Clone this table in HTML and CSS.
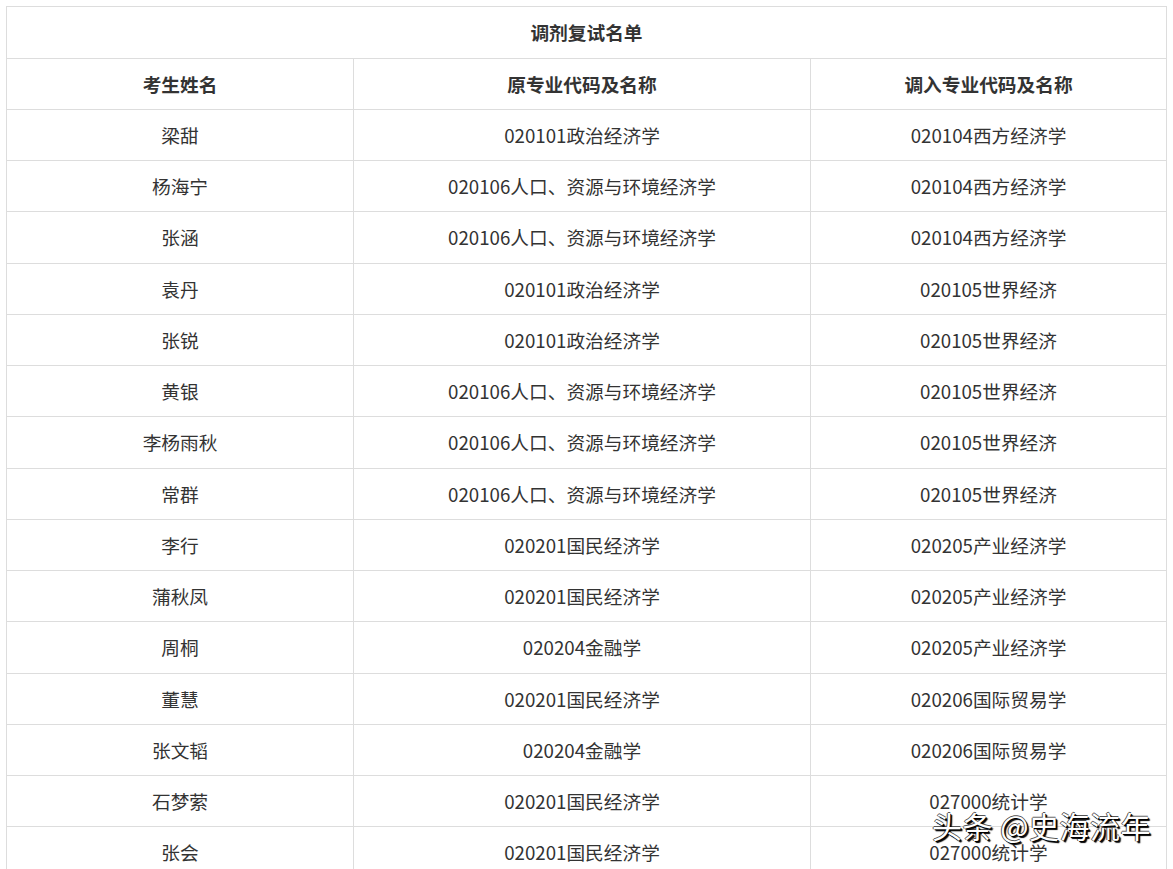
FILE: index.html
```html
<!DOCTYPE html>
<html lang="zh-CN">
<head>
<meta charset="utf-8">
<title>调剂复试名单</title>
<link rel="stylesheet" href="styles.css">
</head>
<body>
<div class="page">
<table class="list">
<colgroup><col class="c1"><col class="c2"><col class="c3"></colgroup>
<thead>
<tr class="title"><th colspan="3">调剂复试名单</th></tr>
<tr class="head"><th>考生姓名</th><th>原专业代码及名称</th><th>调入专业代码及名称</th></tr>
</thead>
<tbody>
<tr><td>梁甜</td><td>020101政治经济学</td><td>020104西方经济学</td></tr>
<tr><td>杨海宁</td><td>020106人口、资源与环境经济学</td><td>020104西方经济学</td></tr>
<tr><td>张涵</td><td>020106人口、资源与环境经济学</td><td>020104西方经济学</td></tr>
<tr><td>袁丹</td><td>020101政治经济学</td><td>020105世界经济</td></tr>
<tr><td>张锐</td><td>020101政治经济学</td><td>020105世界经济</td></tr>
<tr><td>黄银</td><td>020106人口、资源与环境经济学</td><td>020105世界经济</td></tr>
<tr><td>李杨雨秋</td><td>020106人口、资源与环境经济学</td><td>020105世界经济</td></tr>
<tr><td>常群</td><td>020106人口、资源与环境经济学</td><td>020105世界经济</td></tr>
<tr><td>李行</td><td>020201国民经济学</td><td>020205产业经济学</td></tr>
<tr><td>蒲秋凤</td><td>020201国民经济学</td><td>020205产业经济学</td></tr>
<tr><td>周桐</td><td>020204金融学</td><td>020205产业经济学</td></tr>
<tr><td>董慧</td><td>020201国民经济学</td><td>020206国际贸易学</td></tr>
<tr><td>张文韬</td><td>020204金融学</td><td>020206国际贸易学</td></tr>
<tr><td>石梦萦</td><td>020201国民经济学</td><td>027000统计学</td></tr>
<tr><td>张会</td><td>020201国民经济学</td><td>027000统计学</td></tr>
</tbody>
</table>
<div class="watermark">头条 @史海流年</div>
</div>
</body>
</html>
```

FILE: styles.css
```css
html, body {
  margin: 0;
  padding: 0;
  background: #fff;
}
body {
  font-family: "Noto Sans CJK SC", "Microsoft YaHei", sans-serif;
  color: #333;
  overflow: hidden;
}
.page {
  position: relative;
  padding: 6px 0 0 6px;
  height: 863px;
  overflow: hidden;
}
.list {
  border-collapse: collapse;
  table-layout: fixed;
  width: 1160px;
}
.c1 { width: 347px; }
.c2 { width: 457px; }
.c3 { width: 356px; }
.list th, .list td {
  border: 1px solid #ddd;
  padding: 0;
  text-align: center;
  vertical-align: middle;
  font-size: 18.7px;
  line-height: 24px;
}
.list th { font-weight: 700; color: #333; }
.list td { font-weight: 400; color: #333; }
.title th { height: 50.75px; }
.head th { height: 50px; }
.list tbody td { height: 50.26px; }
.watermark {
  position: absolute;
  left: 932px;
  top: 805px;
  font-family: "Noto Sans CJK SC", sans-serif;
  font-size: 30px;
  line-height: 40px;
  color: #fff;
  letter-spacing: 0.5px;
  text-shadow: 1px 1px 0 #000, 2px 2px 1px #000, -1px 0 0 #555, 0 -1px 0 #555;
  white-space: nowrap;
}
```
